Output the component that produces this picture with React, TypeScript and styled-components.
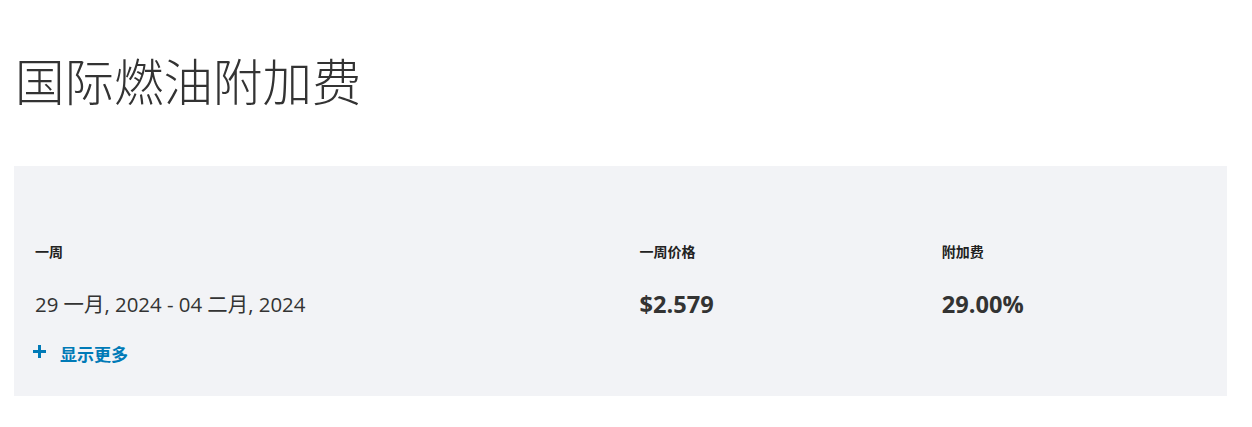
import React from "react";
import styled, { createGlobalStyle } from "styled-components";

const Global = createGlobalStyle`
  html, body { margin: 0; padding: 0; background: #ffffff; }
  body { font-family: "Open Sans", "Noto Sans CJK SC", sans-serif; color: #333333; }
`;

const Page = styled.div`
  padding: 0 25px 0 14px;
`;

const Title = styled.h1`
  margin: 0 0 55px;
  padding: 49px 0 0 1px;
  font-family: "Noto Sans CJK SC", sans-serif;
  font-weight: 300;
  font-size: 49.5px;
  line-height: 62px;
  color: #333333;
`;

const Panel = styled.section`
  background: #f2f3f6;
  height: 230px;
  box-sizing: border-box;
  padding: 72px 4px 0 0;
`;

const Grid = styled.div`
  display: grid;
  grid-template-columns: 2fr 1fr 1fr;
`;

const Cell = styled.div`
  padding-left: 21px;
  display: flex;
  flex-direction: column;
`;

const Label = styled.div`
  font-family: "Open Sans", "Noto Sans CJK SC", sans-serif;
  font-weight: 700;
  font-size: 14px;
  line-height: 28px;
  color: #222222;
`;

const Value = styled.div<{ $bold?: boolean }>`
  margin-top: 24px;
  font-family: "Open Sans", "Noto Sans CJK SC", sans-serif;
  font-weight: ${(p) => (p.$bold ? 700 : 400)};
  font-size: ${(p) => (p.$bold ? "23.6px" : "20.4px")};
  line-height: 28px;
  color: #333333;
`;

const More = styled.button`
  margin: 24px 0 0 -2px;
  padding: 0;
  border: 0;
  background: none;
  display: flex;
  align-items: center;
  gap: 14px;
  cursor: pointer;
  color: #007ab7;
  font-family: "Noto Sans CJK SC", sans-serif;
  font-weight: 700;
  font-size: 17px;
  line-height: 24px;
  align-self: flex-start;
`;

const Plus = () => (
  <svg width="13" height="13" viewBox="0 0 13 13" style={{ marginTop: -6 }}>
    <rect x="5" y="0" width="3" height="13" fill="#007ab7" />
    <rect x="0" y="5" width="13" height="3" fill="#007ab7" />
  </svg>
);

export default function App() {
  return (
    <>
      <Global />
      <Page>
        <Title>国际燃油附加费</Title>
        <Panel>
          <Grid>
            <Cell>
              <Label>一周</Label>
              <Value>29 一月, 2024 - 04 二月, 2024</Value>
              <More>
                <Plus />
                显示更多
              </More>
            </Cell>
            <Cell>
              <Label>一周价格</Label>
              <Value $bold>$2.579</Value>
            </Cell>
            <Cell>
              <Label>附加费</Label>
              <Value $bold>29.00%</Value>
            </Cell>
          </Grid>
        </Panel>
      </Page>
    </>
  );
}
